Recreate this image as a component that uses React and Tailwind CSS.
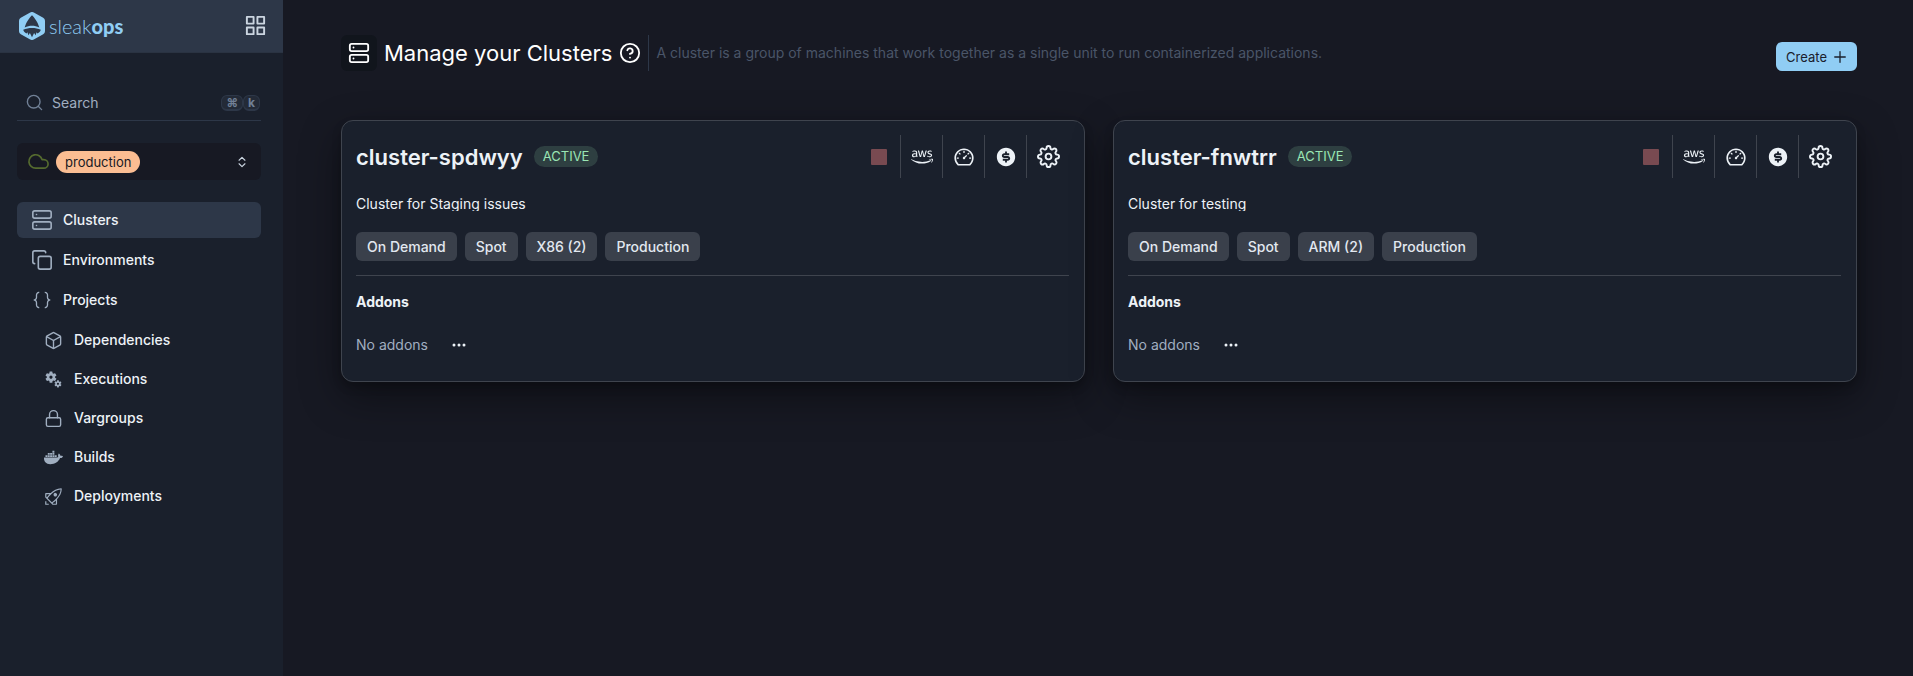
import {
  LuBox,
  LuChevronsUpDown,
  LuCloud,
  LuCopy,
  LuLock,
  LuPlus,
  LuSearch,
  LuServer,
} from "react-icons/lu";
import { FiGrid, FiHelpCircle, FiSettings } from "react-icons/fi";
import { VscJson, VscRocket } from "react-icons/vsc";
import { MdMiscellaneousServices } from "react-icons/md";
import { FaAws, FaDocker } from "react-icons/fa";
import { AiOutlineDashboard } from "react-icons/ai";
import { RiMoneyDollarCircleFill } from "react-icons/ri";
import { BsThreeDots } from "react-icons/bs";

const mainLinks = [
  { label: "Clusters", icon: <LuServer size={22} strokeWidth={1.75} />, active: true },
  { label: "Environments", icon: <LuCopy size={22} strokeWidth={1.75} /> },
  { label: "Projects", icon: <VscJson size={22} /> },
];

const projectLinks = [
  { label: "Dependencies", icon: <LuBox size={19} strokeWidth={1.75} /> },
  { label: "Executions", icon: <MdMiscellaneousServices size={19} /> },
  { label: "Vargroups", icon: <LuLock size={19} strokeWidth={1.75} /> },
  { label: "Builds", icon: <FaDocker size={19} /> },
  { label: "Deployments", icon: <VscRocket size={19} /> },
];

const clusters = [
  {
    name: "cluster-spdwyy",
    description: "Cluster for Staging issues",
    tags: ["On Demand", "Spot", "X86 (2)", "Production"],
  },
  {
    name: "cluster-fnwtrr",
    description: "Cluster for testing",
    tags: ["On Demand", "Spot", "ARM (2)", "Production"],
  },
];

const actions = [
  { label: "AWS console", icon: <FaAws size={22} /> },
  { label: "Metrics", icon: <AiOutlineDashboard size={22} /> },
  { label: "Costs", icon: <RiMoneyDollarCircleFill size={22} /> },
  { label: "Settings", icon: <FiSettings size={23} /> },
];

function Logo() {
  return (
    <a href="#" className="flex items-center gap-1 text-[#90cdf4]">
      <svg width="26" height="28" viewBox="0 0 26 28" aria-hidden="true">
        <path
          fill="currentColor"
          d="M11.2.5a3.6 3.6 0 0 1 3.6 0l9.4 5.3A3.5 3.5 0 0 1 26 8.9v10.2a3.5 3.5 0 0 1-1.8 3.1l-9.4 5.3a3.6 3.6 0 0 1-3.6 0l-9.4-5.3A3.5 3.5 0 0 1 0 19.1V8.9a3.5 3.5 0 0 1 1.8-3.1z"
        />
        <path
          fill="#2d3748"
          d="M13 3.2c2.6 2.5 6 7.3 7.3 12.3-4.6-2.2-10-2.2-14.6 0C7 10.5 10.4 5.7 13 3.2z"
        />
        <path
          fill="#2d3748"
          d="M4.2 17.8c5.300-2.400 12.300-2.400 17.600 0-.5 1.700-1.700 3-3.300 3.600l-.9-1.100-1 3-1.500-2.300-2.100 4.200-2.100-4.200-1.500 2.300-1-3-.9 1.100c-1.600-.6-2.800-1.900-3.300-3.600z"
        />
      </svg>
      <span className="font-[Lato,sans-serif] text-xl leading-6 font-light">
        sleak<span className="font-black">ops</span>
      </span>
    </a>
  );
}

function NavLink({ label, icon, active, nested }) {
  return (
    <a
      href="#"
      aria-current={active ? "page" : undefined}
      className={`flex h-9 items-center rounded-md ${nested ? "gap-[11px] pl-[27px]" : "gap-[10px] pl-[14px]"} ${active ? "bg-[#2d3748]" : ""}`}
    >
      <span className="text-[#a0aec0]">{icon}</span>
      {label}
    </a>
  );
}

function Sidebar() {
  return (
    <aside className="w-[284px] shrink-0 border-r border-[#171923] bg-[#1a202c]">
      <div className="flex h-[53px] items-center justify-between border-b border-[#2a3342] bg-[#2d3748] pr-4 pb-px pl-[19px]">
        <Logo />
        <button type="button" aria-label="Applications" className="text-[#cbd5e0]">
          <FiGrid size={23} />
        </button>
      </div>

      <div className="pr-[22px] pl-[17px]">
        <label className="mt-8 flex h-9 items-center border-b border-[#2d3748] pr-px pl-2">
          <LuSearch size={19} strokeWidth={1.75} className="shrink-0 text-[#718096]" />
          <input
            type="search"
            placeholder="Search"
            aria-label="Search"
            className="ml-2 min-w-0 flex-1 bg-transparent outline-none placeholder:text-[#a0aec0]"
          />
          <kbd className="rounded-md border border-b-2 border-[#2d3748] bg-[#232a37] px-1 font-[Inter,sans-serif] text-xs leading-[13px] font-bold text-[#718096]">
            ⌘
          </kbd>
          <kbd className="rounded-md border border-b-2 border-[#2d3748] bg-[#232a37] px-1 font-[Inter,sans-serif] text-xs leading-[13px] font-bold text-[#718096]">
            k
          </kbd>
        </label>

        <button
          type="button"
          aria-haspopup="listbox"
          className="mt-[22px] flex h-[37px] w-full items-center rounded-md bg-[#171923] pr-3 pl-[10px]"
        >
          <LuCloud size={23} strokeWidth={1.75} className="text-[#556b2f]" />
          <span className="ml-[6px] rounded-full bg-[#fbbd92] px-[9px] text-[13px] leading-[22px] text-[#171923]">
            production
          </span>
          <LuChevronsUpDown size={14} className="ml-auto text-[#cbd5e0]" />
        </button>

        <nav className="mt-[22px] flex flex-col gap-1 font-medium text-[#edf2f7]">
          {mainLinks.map((link) => (
            <NavLink key={link.label} {...link} />
          ))}
          <div className="flex flex-col gap-[3px]">
            {projectLinks.map((link) => (
              <NavLink key={link.label} nested {...link} />
            ))}
          </div>
        </nav>
      </div>
    </aside>
  );
}

function ClusterCard({ name, description, tags }) {
  return (
    <article className="rounded-xl border border-[#3f444e] bg-[#1a202c] pt-[14px] pr-[15px] pb-[22px] pl-[14px] shadow-[0_5px_10px_rgba(0,0,0,0.2),0_15px_40px_rgba(0,0,0,0.4)]">
      <header className="flex h-[43px] items-center">
        <h2 className="text-[22px] leading-7 font-semibold">{name}</h2>
        <span className="ml-[11px] rounded-full bg-[#9ae6b4]/16 px-[9px] text-[13px] leading-[21px] text-[#9ae6b4]">
          ACTIVE
        </span>
        <div className="ml-auto flex self-stretch divide-x divide-[#3f444e] text-[#edf2f7]">
          <button type="button" aria-label="Stop" className="flex w-11 items-center justify-center">
            <span className="size-4 rounded-[1px] bg-[#784a51]" />
          </button>
          {actions.map(({ label, icon }) => (
            <button
              key={label}
              type="button"
              aria-label={label}
              className="flex w-[42px] items-center justify-center"
            >
              {icon}
            </button>
          ))}
        </div>
      </header>

      <p className="mt-[19px] overflow-hidden leading-[14px]">{description}</p>

      <ul className="mt-[21px] flex gap-2 font-medium text-[#e2e8f0]">
        {tags.map((tag) => (
          <li key={tag} className="rounded-md bg-[#3a404b] px-[11px] leading-[29px]">
            {tag}
          </li>
        ))}
      </ul>

      <hr className="mt-[14px] border-[#3f444e]" />

      <h3 className="mt-4 font-bold">Addons</h3>
      <div className="mt-[18px] flex h-[29px] items-center gap-[23px] text-[#a0aec0]">
        No addons
        <button type="button" aria-label="Addon options" className="text-[#edf2f7]">
          <BsThreeDots size={16} />
        </button>
      </div>
    </article>
  );
}

export default function App() {
  return (
    <div className="flex min-h-screen bg-[#171923] font-[Inter,sans-serif] text-[14px] leading-5 text-[#edf2f7]">
      <Sidebar />
      <main className="min-w-0 flex-1 pt-[35px] pr-14 pl-[57px]">
        <header className="flex min-h-9 items-center text-white">
          <span className="flex size-9 items-center justify-center rounded-md bg-[#11151c]">
            <LuServer size={22} />
          </span>
          <h1 className="ml-[7px] text-[22px] leading-7">Manage your Clusters</h1>
          <button type="button" aria-label="Help" className="ml-[7px]">
            <FiHelpCircle size={22} />
          </button>
          <p className="ml-[7px] flex items-center self-stretch border-l border-[#2d3748] pl-[7px] text-[#4a5568]">
            A cluster is a group of machines that work together as a single unit to run containerized applications.
          </p>
          <button
            type="button"
            className="ml-auto flex h-[29px] items-center gap-1 self-end rounded-md bg-[#90cdf4] pr-2 pl-[10px] text-[13px] text-[#1a202c]"
          >
            Create
            <LuPlus size={18} strokeWidth={1.75} />
          </button>
        </header>

        <section className="mt-[49px] grid grid-cols-2 gap-7">
          {clusters.map((cluster) => (
            <ClusterCard key={cluster.name} {...cluster} />
          ))}
        </section>
      </main>
    </div>
  );
}
